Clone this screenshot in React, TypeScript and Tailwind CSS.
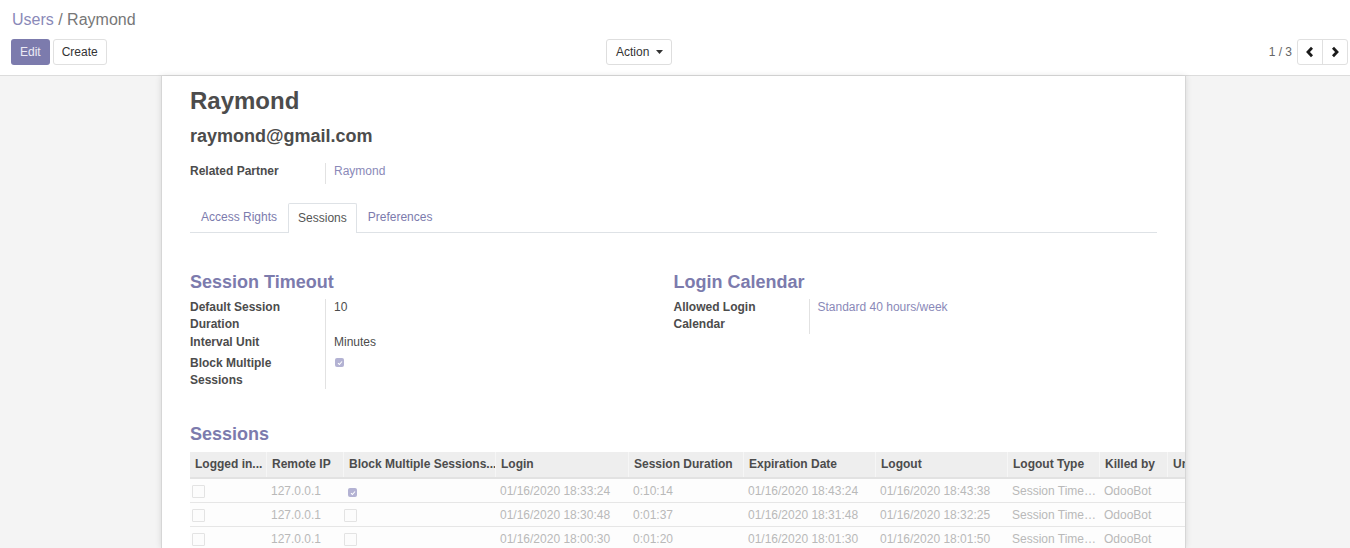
import React from "react";

const FONT = { fontFamily: '"Liberation Sans", Arial, Helvetica, sans-serif' };

function Chevron({ dir }: { dir: "l" | "r" }) {
  return (
    <svg width="10" height="12" viewBox="0 0 10 12" className="block">
      {dir === "l" ? (
        <path d="M7 1.8 L3 6 L7 10.2" fill="none" stroke="#1a1a1a" strokeWidth="2.8" strokeLinejoin="miter" />
      ) : (
        <path d="M3 1.8 L7 6 L3 10.2" fill="none" stroke="#1a1a1a" strokeWidth="2.8" strokeLinejoin="miter" />
      )}
    </svg>
  );
}

function CheckedBox() {
  return (
    <span className="flex h-[9px] w-[9px] items-center justify-center rounded-[2px] bg-[#b3b2d3]">
      <svg width="6" height="6" viewBox="0 0 6 6" className="block">
        <path d="M1 3.2 L2.4 4.5 L5 1.5" fill="none" stroke="#ffffff" strokeWidth="1.1" />
      </svg>
    </span>
  );
}

function EmptyBox() {
  return <span className="block h-[13px] w-[13px] rounded-[1px] border border-[#e3e3e3] bg-[#fcfcfc]" />;
}

const cols = [
  { label: "Logged in...", w: 76 },
  { label: "Remote IP", w: 77 },
  { label: "Block Multiple Sessions...", w: 152 },
  { label: "Login", w: 133 },
  { label: "Session Duration", w: 115 },
  { label: "Expiration Date", w: 132 },
  { label: "Logout", w: 132 },
  { label: "Logout Type", w: 92 },
  { label: "Killed by", w: 68 },
  { label: "Unique Code", w: 100 },
];

const rows = [
  {
    checked: true,
    login: "01/16/2020 18:33:24",
    dur: "0:10:14",
    exp: "01/16/2020 18:43:24",
    out: "01/16/2020 18:43:38",
  },
  {
    checked: false,
    login: "01/16/2020 18:30:48",
    dur: "0:01:37",
    exp: "01/16/2020 18:31:48",
    out: "01/16/2020 18:32:25",
  },
  {
    checked: false,
    login: "01/16/2020 18:00:30",
    dur: "0:01:20",
    exp: "01/16/2020 18:01:30",
    out: "01/16/2020 18:01:50",
  },
];

export default function App() {
  return (
    <div className="h-[548px] w-[1350px] overflow-hidden bg-white text-[12px] text-[#4c4c4c]" style={FONT}>
      {/* Control panel */}
      <div className="border-b border-[#dcdcdc] bg-white pb-[10px] pl-[11px] pr-[2px] pt-[10px]">
        <div className="pl-px text-[16px] leading-5">
          <span className="text-[#8a89b8]">Users</span>
          <span className="text-[#777]"> / Raymond</span>
        </div>
        <div className="mt-[9px] flex h-[26px] items-center">
          <div className="flex w-[595px] gap-[3px]">
            <button className="h-[26px] rounded-[3px] bg-[#7c7bad] px-[9px] text-[12px] text-[#ecebf5]">Edit</button>
            <button className="h-[26px] rounded-[3px] border border-[#e0e0e0] bg-white px-[8px] text-[12px] text-[#333]">
              Create
            </button>
          </div>
          <div className="flex">
            <button className="flex h-[26px] items-center gap-[7px] rounded-[3px] border border-[#dedede] bg-white pl-[9px] pr-[8px] text-[12px] text-[#333]">
              Action
              <svg width="7" height="4" viewBox="0 0 7 4" className="block">
                <path d="M0 0 H7 L3.5 4 Z" fill="#333" />
              </svg>
            </button>
          </div>
          <div className="ml-auto flex items-center">
            <span className="mr-[5px] text-[12px] text-[#666]">1 / 3</span>
            <div className="flex h-[26px] rounded-[3px] border border-[#e0e0e0]">
              <div className="flex w-[25px] items-center justify-center border-r border-[#e0e0e0]">
                <Chevron dir="l" />
              </div>
              <div className="flex w-[24px] items-center justify-center">
                <Chevron dir="r" />
              </div>
            </div>
          </div>
        </div>
      </div>

      {/* Content area */}
      <div className="h-[472px] bg-[#f4f4f4]">
        <div className="ml-[161px] h-full w-[1025px] overflow-hidden border-x border-[#d6d6d6] bg-white px-[28px] pt-[11px] shadow-[0_0_6px_rgba(0,0,0,0.12)]">
          <div className="text-[24px] font-bold leading-[28px] text-[#4c4c4c]">Raymond</div>
          <div className="mt-[10px] text-[18px] font-bold leading-[22px] text-[#4c4c4c]">raymond@gmail.com</div>

          <div className="mt-[16px] flex">
            <div className="w-[135px] font-bold leading-[17px]">Related Partner</div>
            <div className="border-l border-[#e2e2e2] pb-[4px] pl-[8px] leading-[17px] text-[#8a89b8]">Raymond</div>
          </div>

          {/* Tabs */}
          <div className="mt-[19px] flex border-b border-[#dee2e6]">
            <div className="px-[11px] py-[6px] leading-[17px] text-[#7c7bad]">Access Rights</div>
            <div className="-mb-px rounded-t-[2px] border border-b-0 border-[#dee2e6] bg-white px-[9px] py-[6px] leading-[17px] text-[#555]">
              Sessions
            </div>
            <div className="px-[11px] py-[6px] leading-[17px] text-[#7c7bad]">Preferences</div>
          </div>

          {/* Groups */}
          <div className="mt-[38px] flex">
            <div className="w-1/2">
              <div className="text-[18px] font-bold leading-[22px] text-[#7c7bad]">Session Timeout</div>
              <div className="mt-[6px]">
                <div className="flex">
                  <div className="w-[135px] pb-px font-bold leading-[17px]">
                    Default Session
                    <br />
                    Duration
                  </div>
                  <div className="border-l border-[#e2e2e2] pl-[8px] leading-[17px]">10</div>
                </div>
                <div className="flex">
                  <div className="w-[135px] pb-px font-bold leading-[17px]">Interval Unit</div>
                  <div className="border-l border-[#e2e2e2] pl-[8px] leading-[17px]">Minutes</div>
                </div>
                <div className="flex">
                  <div className="w-[135px] pt-[3px] font-bold leading-[17px]">
                    Block Multiple
                    <br />
                    Sessions
                  </div>
                  <div className="flex items-start border-l border-[#e2e2e2] pl-[9px] pt-[6px]">
                    <CheckedBox />
                  </div>
                </div>
              </div>
            </div>
            <div className="w-1/2">
              <div className="text-[18px] font-bold leading-[22px] text-[#7c7bad]">Login Calendar</div>
              <div className="mt-[6px] flex">
                <div className="w-[135px] pb-px font-bold leading-[17px]">
                  Allowed Login
                  <br />
                  Calendar
                </div>
                <div className="border-l border-[#e2e2e2] pl-[8px] leading-[17px] text-[#8a89b8]">
                  Standard 40 hours/week
                </div>
              </div>
            </div>
          </div>

          {/* Sessions table */}
          <div className="mt-[34px] text-[18px] font-bold leading-[22px] text-[#7c7bad]">Sessions</div>
          <div className="mt-[7px] w-[1100px]">
            <div className="flex border-b-2 border-[#e2e2e2] bg-[#eeeeee]">
              {cols.map((c, i) => (
                <div
                  key={c.label}
                  className={
                    "shrink-0 overflow-hidden whitespace-nowrap px-[5px] py-[4px] font-bold leading-[17px] text-[#4c4c4c] " +
                    (i > 0 ? "border-l border-[#f6f6f6]" : "")
                  }
                  style={{ width: c.w }}
                >
                  {c.label}
                </div>
              ))}
            </div>
            {rows.map((r, ri) => (
              <div key={ri} className="flex h-[24px] border-b border-[#e6e6e6] bg-[#fdfdfd] leading-[17px] text-[#b9b9b9]">
                <div className="flex shrink-0 items-start pl-[2px] pt-[6px]" style={{ width: cols[0].w }}>
                  <EmptyBox />
                </div>
                <div className="shrink-0 px-[5px] pt-[4px]" style={{ width: cols[1].w }}>
                  127.0.0.1
                </div>
                <div className="flex shrink-0 items-start" style={{ width: cols[2].w }}>
                  {r.checked ? (
                    <span className="ml-[5px] mt-[9px] block">
                      <CheckedBox />
                    </span>
                  ) : (
                    <span className="ml-[1px] mt-[6px] block">
                      <EmptyBox />
                    </span>
                  )}
                </div>
                <div className="shrink-0 px-[5px] pt-[4px]" style={{ width: cols[3].w }}>
                  {r.login}
                </div>
                <div className="shrink-0 px-[5px] pt-[4px]" style={{ width: cols[4].w }}>
                  {r.dur}
                </div>
                <div className="shrink-0 px-[5px] pt-[4px]" style={{ width: cols[5].w }}>
                  {r.exp}
                </div>
                <div className="shrink-0 px-[5px] pt-[4px]" style={{ width: cols[6].w }}>
                  {r.out}
                </div>
                <div className="shrink-0 whitespace-nowrap px-[5px] pt-[4px]" style={{ width: cols[7].w }}>
                  Session Time…
                </div>
                <div className="shrink-0 px-[5px] pt-[4px]" style={{ width: cols[8].w }}>
                  OdooBot
                </div>
                <div className="shrink-0 px-[5px] pt-[4px]" style={{ width: cols[9].w }} />
              </div>
            ))}
          </div>
        </div>
      </div>
    </div>
  );
}
